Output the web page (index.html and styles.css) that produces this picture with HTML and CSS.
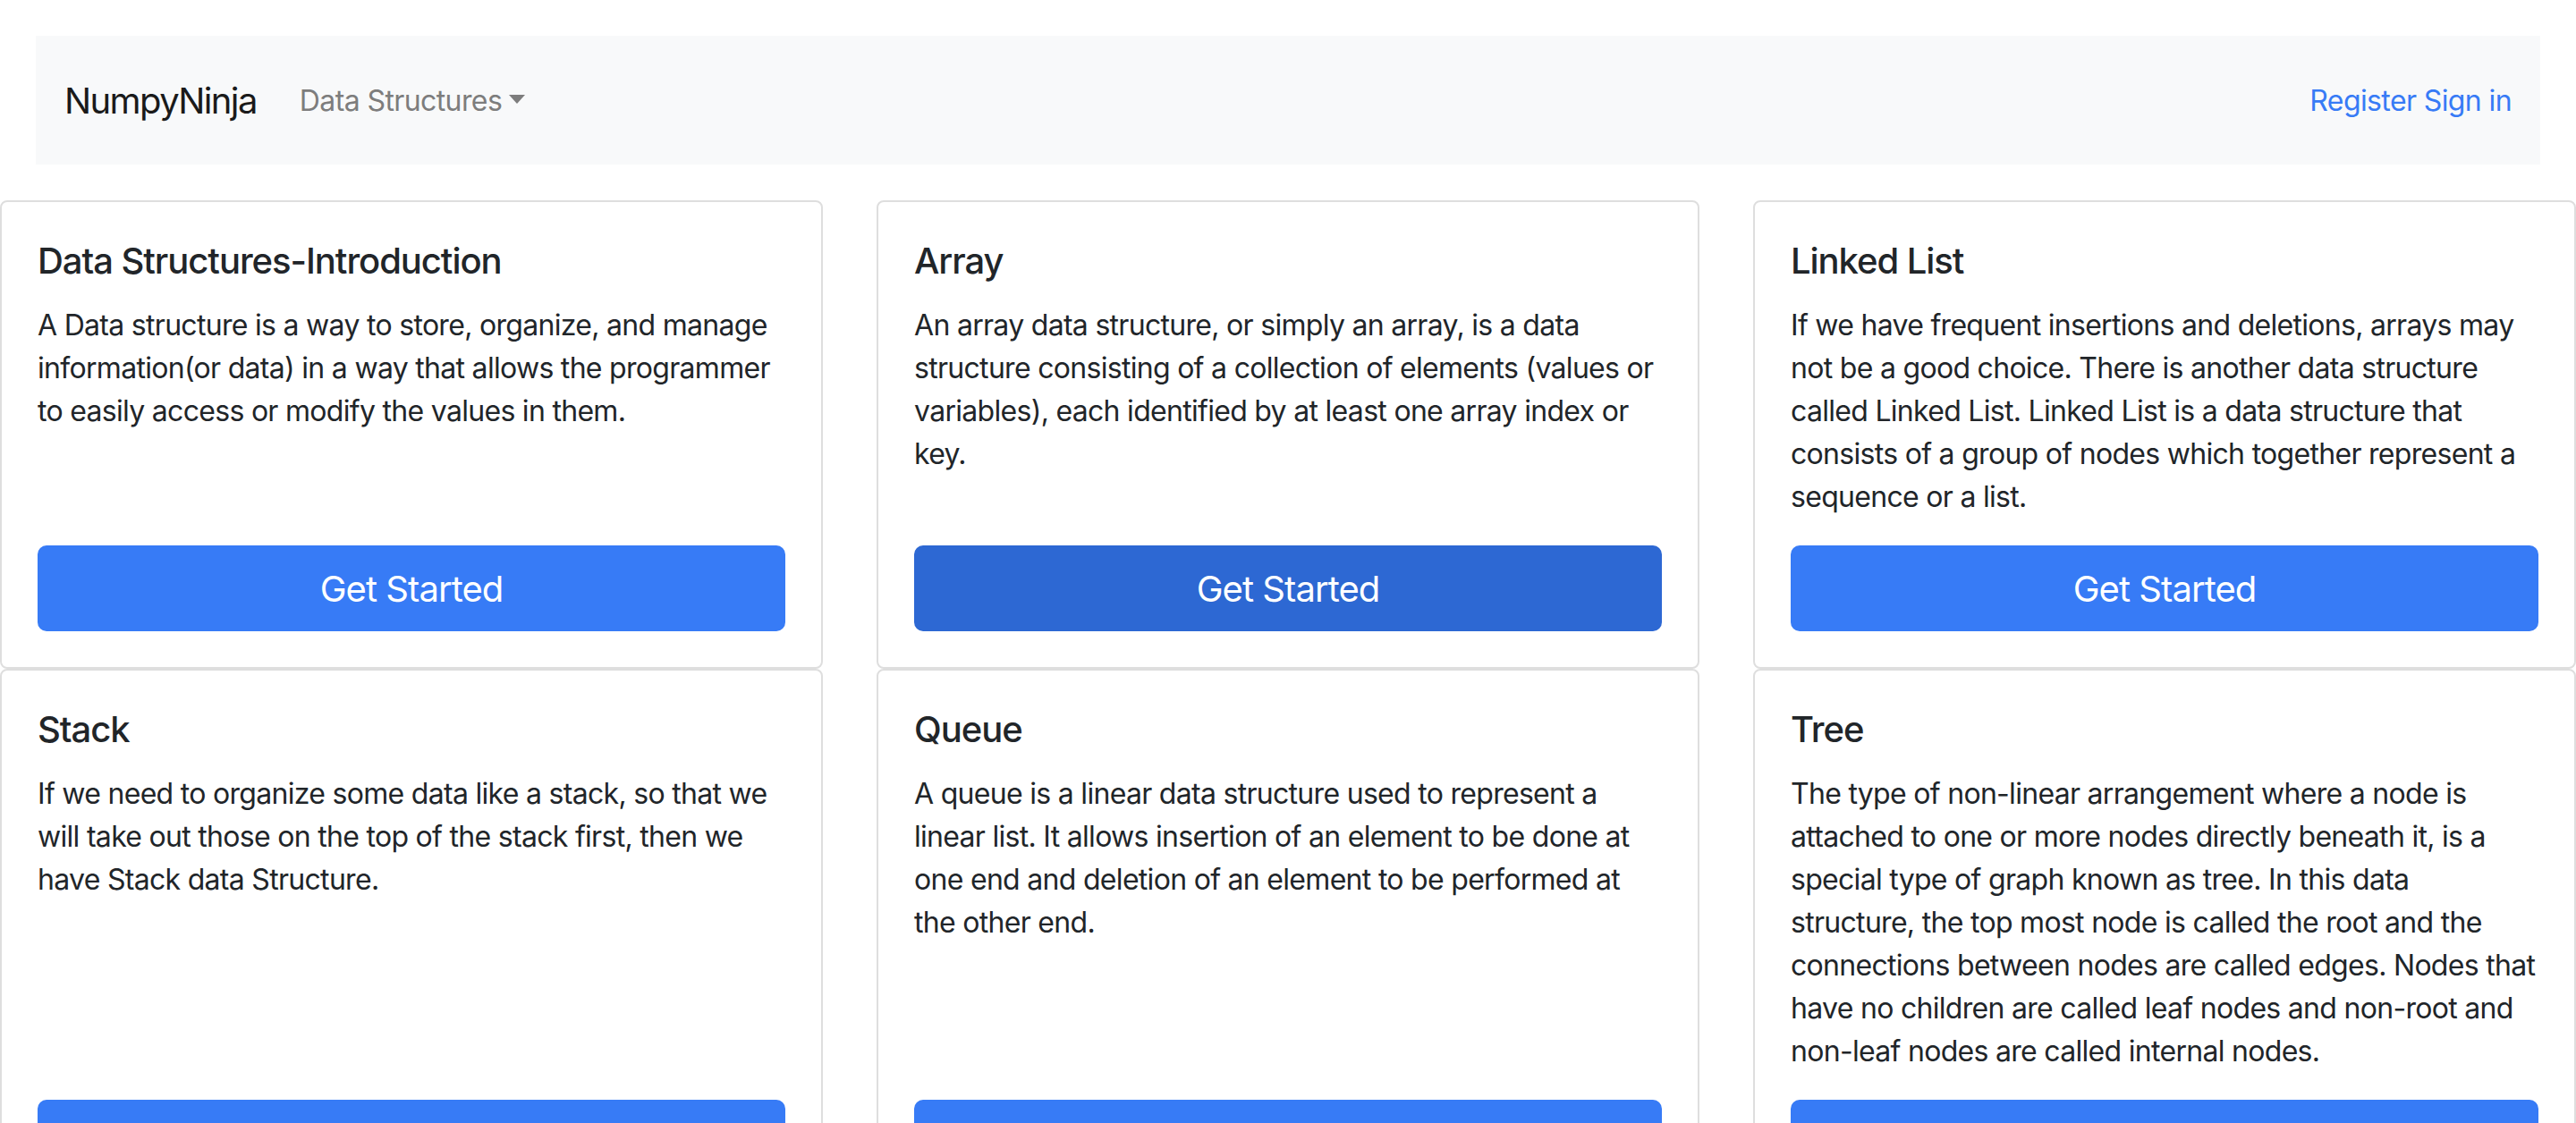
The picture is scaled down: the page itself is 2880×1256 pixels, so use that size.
FILE: index.html
```html
<!DOCTYPE html>
<html lang="en">
<head>
<meta charset="utf-8">
<title>NumpyNinja</title>
<link rel="stylesheet" href="styles.css">
</head>
<body>
<nav class="navbar">
  <div class="nav-left">
    <a class="brand" href="#">NumpyNinja</a>
    <a class="nav-link dropdown-toggle" href="#">Data Structures</a>
  </div>
  <div class="nav-right">
    <a class="auth-link" href="#">Register</a> <a class="auth-link" href="#">Sign in</a>
  </div>
</nav>
<main class="cards">
  <div class="card">
    <h5 class="card-title">Data Structures-Introduction</h5>
    <p class="card-text">A Data structure is a way to store, organize, and manage information(or data) in a way that allows the programmer to easily access or modify the values in them.</p>
    <a class="btn" href="#">Get Started</a>
  </div>
  <div class="card">
    <h5 class="card-title">Array</h5>
    <p class="card-text">An array data structure, or simply an array, is a data structure consisting of a collection of elements (values or variables), each identified by at least one array index or key.</p>
    <a class="btn btn-hover" href="#">Get Started</a>
  </div>
  <div class="card">
    <h5 class="card-title">Linked List</h5>
    <p class="card-text">If we have frequent insertions and deletions, arrays may not be a good choice. There is another data structure called Linked List. Linked List is a data structure that consists of a group of nodes which together represent a sequence or a list.</p>
    <a class="btn" href="#">Get Started</a>
  </div>
  <div class="card">
    <h5 class="card-title">Stack</h5>
    <p class="card-text">If we need to organize some data like a stack, so that we will take out those on the top of the stack first, then we have Stack data Structure.</p>
    <a class="btn" href="#">Get Started</a>
  </div>
  <div class="card">
    <h5 class="card-title">Queue</h5>
    <p class="card-text">A queue is a linear data structure used to represent a linear list. It allows insertion of an element to be done at one end and deletion of an element to be performed at the other end.</p>
    <a class="btn" href="#">Get Started</a>
  </div>
  <div class="card">
    <h5 class="card-title">Tree</h5>
    <p class="card-text">The type of non-linear arrangement where a node is attached to one or more nodes directly beneath it, is a special type of graph known as tree. In this data structure, the top most node is called the root and the connections between nodes are called edges. Nodes that have no children are called leaf nodes and non-root and non-leaf nodes are called internal nodes.</p>
    <a class="btn" href="#">Get Started</a>
  </div>
</main>
</body>
</html>
```
FILE: styles.css
```css
html, body {
  margin: 0;
  padding: 0;
  background: #ffffff;
  overflow: hidden;
}
body {
  font-family: Inter, "Noto Sans", "Liberation Sans", sans-serif;
  font-size: 32px;
  line-height: 1.5;
  color: #212529;
  letter-spacing: -0.7px;
}
a { text-decoration: none; }

.navbar {
  margin: 40px;
  height: 144px;
  box-sizing: border-box;
  padding: 2px 32px 0 32px;
  background: #f8f9fa;
  display: flex;
  align-items: center;
  justify-content: space-between;
}
.nav-left {
  display: flex;
  align-items: center;
}
.brand {
  font-size: 40px;
  line-height: 60px;
  color: #1a1a1a;
  letter-spacing: -1.6px;
  margin-right: 32px;
}
.nav-link {
  color: #7d7d7d;
  padding: 0 16px;
  line-height: 48px;
  letter-spacing: -0.6px;
}
.dropdown-toggle::after {
  content: "";
  display: inline-block;
  margin-left: 8px;
  vertical-align: 8px;
  border-top: 10px solid #7d7d7d;
  border-left: 9px solid transparent;
  border-right: 9px solid transparent;
}
.auth-link {
  color: #377bf6;
  letter-spacing: -0.6px;
}

.cards {
  display: grid;
  grid-template-columns: repeat(3, 920px);
  column-gap: 60px;
}
.card {
  border: 2px solid #dedede;
  border-radius: 8px;
  padding: 42px 40px 40px 40px;
  display: flex;
  flex-direction: column;
  background: #fff;
}
.card-title {
  margin: 0 0 24px 0;
  font-size: 40px;
  font-weight: 500;
  line-height: 48px;
  letter-spacing: -1.05px;
  color: #212529;
}
.card-text {
  margin: 0 0 30px 0;
}
.btn {
  margin-top: auto;
  display: block;
  text-align: center;
  background: #377bf6;
  color: #ffffff;
  font-size: 40px;
  line-height: 60px;
  letter-spacing: -0.95px;
  padding: 17px 32px 15px 32px;
  border: 2px solid transparent;
  border-radius: 10px;
}
.btn-hover {
  background: #2d68d3;
}
```
